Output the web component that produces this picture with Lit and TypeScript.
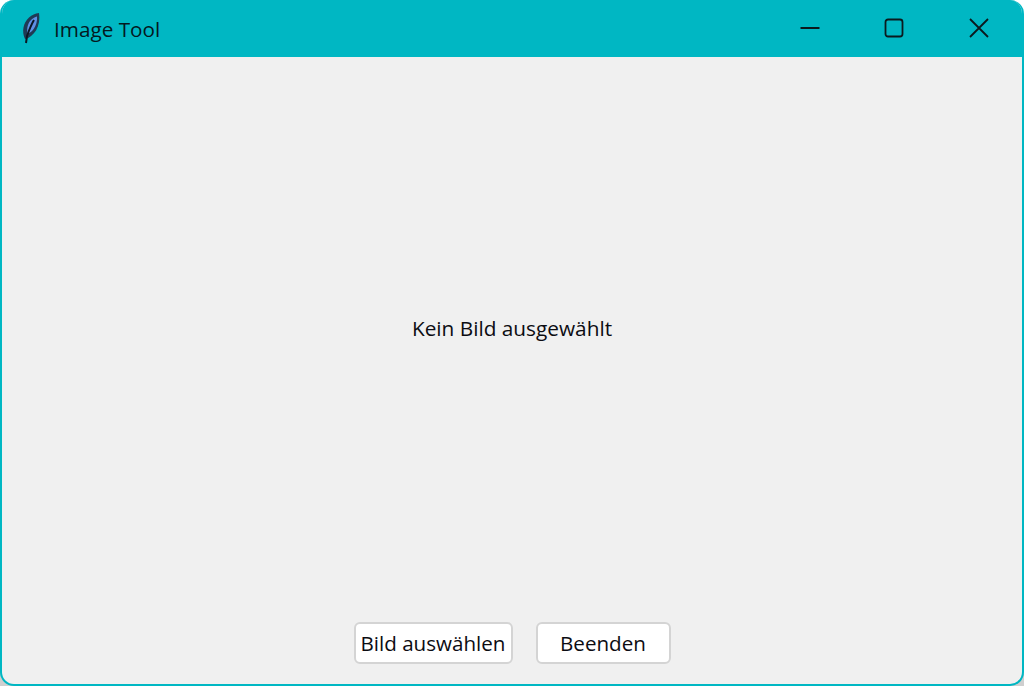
import { LitElement, html, css } from "lit";
import { customElement } from "lit/decorators.js";

@customElement("app-root")
export class AppRoot extends LitElement {
  static styles = css`
    :host { display: block; width: 1024px; height: 686px; background: linear-gradient(#fff 50%, #cfcfcf 50%); font-family: "Open Sans", "Noto Sans", sans-serif; color: #0c0c12; }
    .win { box-sizing: border-box; width: 1024px; height: 686px; display: flex; flex-direction: column; background: #f0f0f0; border: 2px solid #00b7c3; border-top: 0; border-radius: 14px; overflow: hidden; }
    .bar { flex: none; box-sizing: border-box; height: 57px; margin: 0 -2px; background: #00b7c3; display: flex; align-items: center; padding: 0 0 2px 20px; }
    .icon { width: 22px; height: 32px; flex: none; }
    .title { margin: 2px 0 0 12px; font-size: 20.7px; color: #04191f; }
    .ctl { margin-left: auto; display: flex; }
    .ctl button { width: 84.5px; height: 55px; padding: 0; border: 0; background: none; display: flex; align-items: center; justify-content: center; }
    .ctl svg { width: 20px; height: 20px; fill: none; stroke: #0b1a1e; stroke-width: 1.8; }
    .ctl .close { margin-right: 3px; }
    .main { flex: 1; display: flex; align-items: center; justify-content: center; font-size: 20.8px; padding-bottom: 23px; }
    .actions { flex: none; display: flex; justify-content: center; gap: 23px; padding: 0 0 20px; }
    .actions button { box-sizing: border-box; height: 42px; padding: 0; background: #fff; border: 2px solid #d4d4d4; border-radius: 6px; font: inherit; font-size: 20.6px; color: #0c0c12; white-space: nowrap; }
    .pick { width: 159px; }
    .quit { width: 135px; }
  `;

  render() {
    return html`<div class="win">
      <div class="bar">
        <svg class="icon" viewBox="0 0 22 32">
          <path d="M5 27 C1.500 20 3 11 9 5.500 C12 3 15 1.500 19 1 C20 7 19 13 16 18.500 C13 23 9.500 26 5 27 Z" fill="#1f3a55" />
          <path d="M7.500 22 C6.500 16 8 11 11 8 C13 6 15 5 17 4.500 C17.500 9 16 13.500 14 16.500 C12.500 19 10 21 7.500 22 Z" fill="#5f8fe4" />
          <path d="M14 8 C11.500 12 9.500 17 7 24 L6 31" fill="none" stroke="#0b1622" stroke-width="2" />
        </svg>
        <span class="title">Image Tool</span>
        <div class="ctl">
          <button aria-label="Minimieren"><svg viewBox="0 0 20 20"><path d="M0.500 10 H19.500" /></svg></button>
          <button aria-label="Maximieren"><svg viewBox="0 0 20 20"><rect x="1.500" y="1.500" width="17" height="17" rx="2.500" /></svg></button>
          <button class="close" aria-label="Schließen"><svg viewBox="0 0 20 20"><path d="M1 1 L19 19 M19 1 L1 19" /></svg></button>
        </div>
      </div>
      <div class="main">Kein Bild ausgewählt</div>
      <div class="actions">
        <button class="pick">Bild auswählen</button>
        <button class="quit">Beenden</button>
      </div>
    </div>`;
  }
}
